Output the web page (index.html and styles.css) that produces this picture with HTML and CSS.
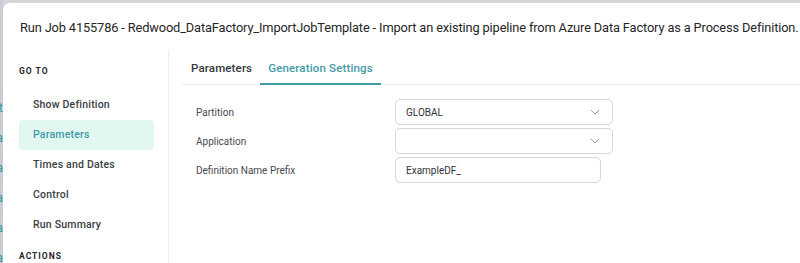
FILE: index.html
```html
<!DOCTYPE html>
<html lang="en">
<head>
    <meta charset="UTF-8">
    <title>Run Job</title>
    <link rel="stylesheet" href="styles.css">
</head>
<body>
    <div class="backdrop">
        <div class="bg-row">t</div>
        <div class="bg-row">a</div>
        <div class="bg-row">a</div>
        <div class="bg-row">a</div>
        <div class="bg-row">a</div>
        <div class="bg-row">a</div>
    </div>

    <div class="modal">
        <h1 class="modal-title">Run Job 4155786 - Redwood_DataFactory_ImportJobTemplate - Import an existing pipeline from Azure Data Factory as a Process Definition.</h1>
        <div class="modal-body">
            <nav class="sidebar">
                <div class="nav-heading">Go to</div>
                <a class="nav-item">Show Definition</a>
                <a class="nav-item active">Parameters</a>
                <a class="nav-item">Times and Dates</a>
                <a class="nav-item">Control</a>
                <a class="nav-item">Run Summary</a>
                <div class="nav-heading actions">Actions</div>
            </nav>
            <main class="content">
                <div class="tabs">
                    <div class="tab">Parameters</div>
                    <div class="tab active">Generation Settings</div>
                </div>
                <form class="form">
                    <div class="form-row">
                        <label>Partition</label>
                        <div class="select">
                            <span>GLOBAL</span>
                            <svg width="10" height="6" viewBox="0 0 10 6"><path d="M1 1l4 4 4-4" fill="none" stroke="#9a9a9a" stroke-width="1"/></svg>
                        </div>
                    </div>
                    <div class="form-row">
                        <label>Application</label>
                        <div class="select">
                            <span></span>
                            <svg width="10" height="6" viewBox="0 0 10 6"><path d="M1 1l4 4 4-4" fill="none" stroke="#9a9a9a" stroke-width="1"/></svg>
                        </div>
                    </div>
                    <div class="form-row">
                        <label>Definition Name Prefix</label>
                        <input class="text-input" type="text" value="ExampleDF_">
                    </div>
                </form>
            </main>
        </div>
    </div>
</body>
</html>
```

FILE: styles.css
```css
html, body {
    margin: 0;
    height: 100%;
    overflow: hidden;
}

body {
    background: #d4d5d8;
    font-family: Roboto, "Noto Sans", sans-serif;
    position: relative;
}

/* page behind the dialog, only its edge shows */
.backdrop {
    padding-top: 93px;
    width: 3px;
    overflow: hidden;
    background: #c9ccd2;
    height: 100%;
}
.bg-row {
    height: 30px;
    font-size: 13px;
    color: #3a9aa6;
    direction: rtl;
    border-top: 1px solid #bfc3c9;
    box-sizing: border-box;
    padding-top: 6px;
}

.modal {
    position: absolute;
    top: 3px;
    left: 3px;
    right: -20px;
    bottom: -20px;
    background: #fff;
    border-radius: 7px 0 0 0;
    display: flex;
    flex-direction: column;
}

.modal-title {
    margin: 0;
    padding: 17px 0 0 17px;
    height: 30px;
    font-size: 12.8px;
    font-weight: 400;
    letter-spacing: -0.13px;
    color: #262626;
    white-space: nowrap;
}

.modal-body {
    flex: 1;
    display: flex;
}

.sidebar {
    width: 166px;
    border-right: 1px solid #ececf1;
    padding: 14px 0 0 16px;
    box-sizing: border-box;
}
.nav-heading {
    font-size: 8.5px;
    font-weight: 700;
    letter-spacing: 1px;
    text-transform: uppercase;
    color: #25282c;
    height: 26px;
    line-height: 14px;
}
.nav-heading.actions {
    margin-top: 9px;
}
.nav-item {
    display: block;
    margin-right: 14px;
    height: 30px;
    line-height: 30px;
    padding-left: 14px;
    font-size: 10.5px;
    font-weight: 500;
    letter-spacing: 0.2px;
    color: #3a3e44;
    border-radius: 4px;
}
.nav-item.active {
    background: #e3f7f1;
    color: #3d9ba8;
}

.content {
    flex: 1;
    padding: 2px 0 0 13px;
}

.tabs {
    display: flex;
    border-bottom: 1px solid #ececf1;
    height: 32px;
    padding-left: 1px;
}
.tab {
    padding: 0 8px;
    height: 31px;
    line-height: 32px;
    font-size: 11.5px;
    font-weight: 500;
    letter-spacing: 0.15px;
    color: #33363b;
    border-bottom: 2px solid transparent;
}
.tab.active {
    color: #3f9ba7;
    border-bottom-color: #3f9ba7;
}

.form {
    padding: 14px 0 0 14px;
    display: flex;
    flex-direction: column;
    gap: 3px;
}
.form-row {
    display: flex;
    align-items: center;
    height: 26px;
}
.form-row label {
    width: 199px;
    font-size: 10px;
    color: #474a4f;
}
.select, .text-input {
    height: 26px;
    box-sizing: border-box;
    border: 1px solid #d6d6da;
    border-radius: 5px;
    background: #fff;
    font-family: Roboto, sans-serif;
    font-size: 10px;
    color: #303236;
    padding: 0 10px;
}
.select {
    width: 218px;
    display: flex;
    align-items: center;
    justify-content: space-between;
}
.select svg {
    margin-right: 2px;
}
.text-input {
    width: 206px;
    outline: none;
}
```
